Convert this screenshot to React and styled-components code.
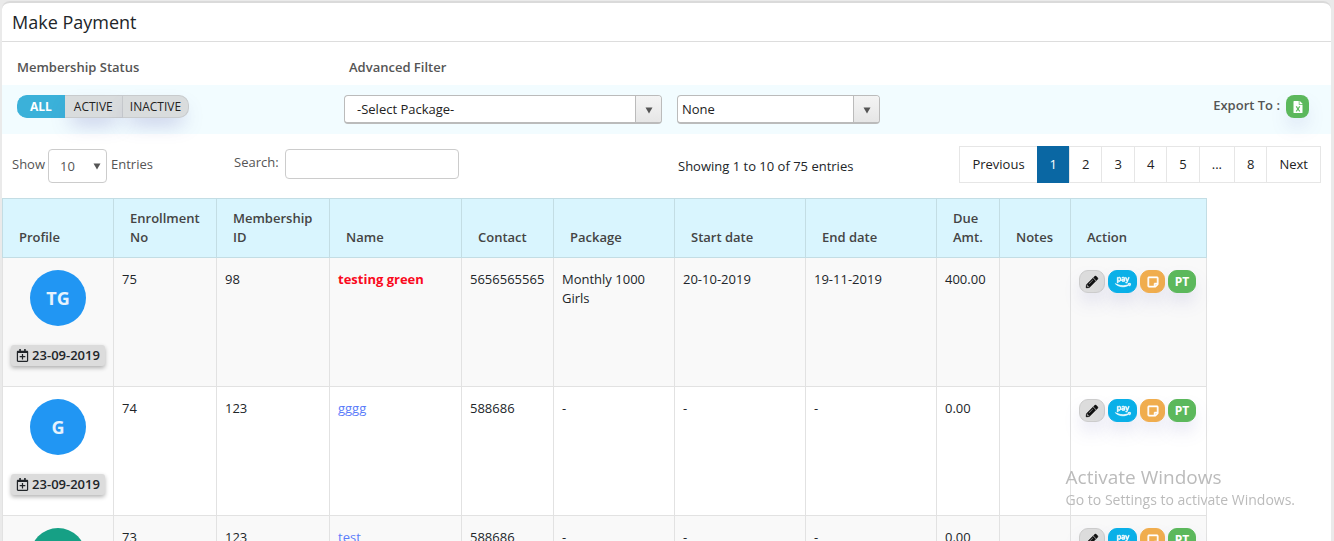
import styled, { createGlobalStyle } from "styled-components"
import {
    FaAmazonPay,
    FaFileExcel,
    FaPencilAlt,
    FaRegCalendarPlus,
    FaRegStickyNote,
} from "react-icons/fa"

const members = [
    {
        initials: "TG",
        color: "#2196F3",
        joined: "23-09-2019",
        enrollment: "75",
        memberId: "98",
        name: "testing green",
        due: true,
        contact: "5656565565",
        plan: "Monthly 1000 Girls",
        start: "20-10-2019",
        end: "19-11-2019",
        amount: "400.00",
    },
    {
        initials: "G",
        color: "#2196F3",
        joined: "23-09-2019",
        enrollment: "74",
        memberId: "123",
        name: "gggg",
        contact: "588686",
        plan: "-",
        start: "-",
        end: "-",
        amount: "0.00",
    },
    {
        initials: "T",
        color: "#16A085",
        joined: "23-09-2019",
        enrollment: "73",
        memberId: "123",
        name: "test",
        contact: "588686",
        plan: "-",
        start: "-",
        end: "-",
        amount: "0.00",
    },
]

const columns = [
    { label: "Profile", width: 111 },
    { label: "Enrollment No", width: 103 },
    { label: "Membership ID", width: 113 },
    { label: "Name", width: 132 },
    { label: "Contact", width: 92 },
    { label: "Package", width: 121 },
    { label: "Start date", width: 131 },
    { label: "End date", width: 131 },
    { label: "Due Amt.", width: 63 },
    { label: "Notes", width: 71 },
    { label: "Action", width: 136 },
]

const pages = ["Previous", "1", "2", "3", "4", "5", "...", "8", "Next"]

const Arrow = () => (
    <ArrowIcon viewBox="0 0 8 7" aria-hidden="true">
        <path d="M0.5 0.5h7L4 6.5z" fill="currentColor" />
    </ArrowIcon>
)

const MemberRow = ({ member }) => {
    return (
        <Row>
            <ProfileCell>
                <Avatar $color={member.color}>{member.initials}</Avatar>
                <JoinDate>
                    <FaRegCalendarPlus />
                    {member.joined}
                </JoinDate>
            </ProfileCell>
            <Cell>{member.enrollment}</Cell>
            <Cell>{member.memberId}</Cell>
            <Cell>
                <NameLink href="#" $due={member.due}>{member.name}</NameLink>
            </Cell>
            <Cell>{member.contact}</Cell>
            <Cell>{member.plan}</Cell>
            <Cell>{member.start}</Cell>
            <Cell>{member.end}</Cell>
            <Cell>{member.amount}</Cell>
            <Cell />
            <Cell>
                <Actions>
                    <ActionButton $width={26} $bg="#DCDCDC" $fg="#111" $edge="#CCC" aria-label="Edit">
                        <FaPencilAlt size={12} strokeWidth={16} />
                    </ActionButton>
                    <ActionButton $width={29} $bg="#0AB0E8" aria-label="Pay">
                        <FaAmazonPay size={16} strokeWidth={28} />
                    </ActionButton>
                    <ActionButton $width={25} $bg="#F0AD4E" aria-label="Note">
                        <FaRegStickyNote size={12} strokeWidth={24} />
                    </ActionButton>
                    <ActionButton $width={28} $bg="#5CB85C">PT</ActionButton>
                </Actions>
            </Cell>
        </Row>
    )
}

const App = () => {
    return (
        <>
            <GlobalStyle />
            <Panel>
                <PanelTitle>Make Payment</PanelTitle>
                <FilterLabels>
                    <FilterLabel>Membership Status</FilterLabel>
                    <FilterLabel as="label" htmlFor="package">Advanced Filter</FilterLabel>
                </FilterLabels>
                <FilterBar>
                    <StatusColumn>
                        <StatusGroup>
                            <StatusButton $active>ALL</StatusButton>
                            <StatusButton>ACTIVE</StatusButton>
                            <StatusButton>INACTIVE</StatusButton>
                        </StatusGroup>
                    </StatusColumn>
                    <SelectBox $width={318}>
                        <FilterSelect id="package" $indent={12}>
                            <option>-Select Package-</option>
                        </FilterSelect>
                        <SelectToggle><Arrow /></SelectToggle>
                    </SelectBox>
                    <SelectBox $width={203}>
                        <FilterSelect aria-label="Filter by" $indent={4}>
                            <option>None</option>
                        </FilterSelect>
                        <SelectToggle><Arrow /></SelectToggle>
                    </SelectBox>
                    <Export>
                        Export To :
                        <ExportButton aria-label="Export to Excel">
                            <FaFileExcel size={12} />
                        </ExportButton>
                    </Export>
                </FilterBar>
                <TableTools>
                    <Length>
                        Show
                        <LengthBox>
                            <LengthSelect aria-label="Entries per page">
                                <option>10</option>
                            </LengthSelect>
                            <LengthArrow><Arrow /></LengthArrow>
                        </LengthBox>
                        Entries
                    </Length>
                    <Search>
                        Search:
                        <SearchInput type="text" />
                    </Search>
                    <Info>Showing 1 to 10 of 75 entries</Info>
                    <Pagination>
                        {pages.map((page) => (
                            <PageButton key={page} $active={page === "1"}>{page}</PageButton>
                        ))}
                    </Pagination>
                </TableTools>
                <Table>
                    <colgroup>
                        {columns.map((column) => (
                            <col key={column.label} width={column.width} />
                        ))}
                    </colgroup>
                    <thead>
                        <tr>
                            {columns.map((column) => (
                                <HeadCell key={column.label}>{column.label}</HeadCell>
                            ))}
                        </tr>
                    </thead>
                    <tbody>
                        {members.map((member) => (
                            <MemberRow key={member.enrollment} member={member} />
                        ))}
                    </tbody>
                </Table>
            </Panel>
            <Watermark>
                <WatermarkTitle>Activate Windows</WatermarkTitle>
                <WatermarkText>Go to Settings to activate Windows.</WatermarkText>
            </Watermark>
        </>
    )
}

export default App

const GlobalStyle = createGlobalStyle`
* {
box-sizing: border-box;
}

body {
margin: 0;
background: #EAEAEA;
color: #212529;
font-family: "Open Sans", sans-serif;
font-size: 13px;
line-height: 19px;
}

button, input, select {
font-family: inherit;
font-size: inherit;
}
`

const Panel = styled.main`
margin: 1px 3px 0 2px;
border-top: 2px solid #DADADA;
border-radius: 8px 8px 0 0;
background: #FFF;
`

const PanelTitle = styled.h1`
margin: 0;
padding: 7px 10px;
border-bottom: 1px solid #DDD;
font-size: 18px;
font-weight: 400;
line-height: 24px;
`

const FilterLabels = styled.div`
display: flex;
padding: 16px 15px 8px;
`

const FilterLabel = styled.div`
color: #555;
font-weight: 600;

&:first-child {
width: 332px;
}
`

const FilterBar = styled.div`
display: flex;
align-items: flex-start;
gap: 15px;
padding: 10px 22px 10px 15px;
background: #F2FCFF;
`

const StatusColumn = styled.div`
width: 312px;
`

const StatusGroup = styled.div`
display: inline-flex;
`

const StatusButton = styled.button`
height: 23px;
padding: ${(props) => (props.$active ? "0 12px 0 13px" : "0 9px")};
border: 1px solid ${(props) => (props.$active ? "#3BB1D9" : "#C8CBCD")};
border-left-width: 0;
background: ${(props) => (props.$active ? "#3BB1D9" : "#D9DCDD")};
color: ${(props) => (props.$active ? "#FFF" : "#222")};
box-shadow: ${(props) => (props.$active ? "none" : "0 10px 20px -6px rgba(80, 80, 170, 0.4)")};
font-size: 12px;
font-weight: ${(props) => (props.$active ? 700 : 400)};
cursor: pointer;

&:first-child {
border-radius: 10px 0 0 10px;
}

&:last-child {
padding: 0 7px;
border-radius: 0 10px 10px 0;
}
`

const SelectBox = styled.div`
display: flex;
width: ${(props) => props.$width}px;
height: 29px;
border: 1px solid #BBB;
border-bottom-width: 2px;
border-radius: 4px;
background: #FFF;
overflow: hidden;
`

const FilterSelect = styled.select`
flex: 1;
padding: 0 ${(props) => props.$indent}px;
border: 0;
background: transparent;
color: #222;
appearance: none;
outline: none;
`

const SelectToggle = styled.span`
display: flex;
align-items: center;
justify-content: center;
width: 26px;
padding-top: 2px;
border-left: 1px solid #BBB;
background: linear-gradient(#F4F4F4, #E6E6E6);
color: #555;
`

const ArrowIcon = styled.svg`
width: 8px;
height: 7px;
`

const Export = styled.div`
display: flex;
gap: 6px;
margin-left: auto;
color: #555;
font-weight: 600;
line-height: 20px;
`

const ExportButton = styled.button`
display: flex;
align-items: center;
justify-content: center;
width: 23px;
height: 23px;
padding: 0;
border: 0;
border-radius: 8px;
background: #5CB85C;
color: #FFF;
box-shadow: 0 10px 20px -6px rgba(80, 80, 170, 0.4);
cursor: pointer;
`

const TableTools = styled.div`
display: flex;
align-items: flex-start;
padding: 12px 10px 15px;
`

const Length = styled.div`
display: flex;
gap: 4px;
width: 222px;
padding-top: 3px;
color: #555;
line-height: 30px;
`

const LengthBox = styled.div`
position: relative;
margin-left: -1px;
`

const LengthSelect = styled.select`
display: block;
width: 59px;
height: 34px;
padding: 0 11px;
border: 1px solid #CCC;
border-radius: 4px;
background: #FFF;
color: #555;
appearance: none;
`

const LengthArrow = styled.span`
display: flex;
align-items: center;
position: absolute;
top: 0;
bottom: 0;
right: 6px;
pointer-events: none;
`

const Search = styled.label`
display: flex;
gap: 6px;
width: 444px;
padding-top: 3px;
color: #555;
line-height: 26px;
`

const SearchInput = styled.input`
width: 174px;
height: 30px;
padding: 0 8px;
border: 1px solid #CCC;
border-radius: 4px;
background: #FFF;
`

const Info = styled.div`
padding-top: 11px;
`

const Pagination = styled.nav`
display: flex;
margin-left: auto;
`

const PageButton = styled.button`
height: 37px;
padding: 0 12px 2px;
border: 1px solid ${(props) => (props.$active ? "#0A67A3" : "#E6E6E6")};
margin-left: -1px;
background: ${(props) => (props.$active ? "#0A67A3" : "#FFF")};
color: ${(props) => (props.$active ? "#FFF" : "#222")};
cursor: pointer;
`

const Table = styled.table`
border-collapse: collapse;
table-layout: fixed;
width: 1205px;
max-width: 100%;
`

const HeadCell = styled.th`
padding: 10px 16px;
border: 1px solid #C3DDE4;
background: #D9F5FE;
color: #444;
font-weight: 600;
text-align: left;
vertical-align: bottom;
`

const Row = styled.tr`
&:nth-child(odd) {
background: #F9F9F9;
}
`

const Cell = styled.td`
height: 129px;
padding: 12px 8px;
border: 1px solid #E2E2E2;
vertical-align: top;
`

const ProfileCell = styled(Cell)`
text-align: center;
`

const Avatar = styled.div`
display: flex;
align-items: center;
justify-content: center;
width: 56px;
height: 56px;
margin: 0 auto 19px;
border-radius: 50%;
background: ${(props) => props.$color};
color: #E6F2FD;
font-size: 18px;
font-weight: 700;
`

const JoinDate = styled.span`
display: inline-flex;
align-items: center;
gap: 3px;
height: 21px;
margin: 0 -4px;
padding: 0 5px;
border-radius: 3px;
background: #DCDCDC;
box-shadow: 0 2px 4px rgba(0, 0, 0, 0.3);
font-weight: 600;
white-space: nowrap;
`

const NameLink = styled.a`
color: ${(props) => (props.$due ? "#FA0A1E" : "#5B7CFA")};
font-weight: ${(props) => (props.$due ? 700 : 400)};
text-decoration: none;
`

const Actions = styled.div`
display: flex;
gap: 3px;
`

const ActionButton = styled.button`
display: flex;
align-items: center;
justify-content: center;
width: ${(props) => props.$width}px;
height: 23px;
padding: 0;
border: 1px solid ${(props) => props.$edge || props.$bg};
border-radius: 9px;
background: ${(props) => props.$bg};
color: ${(props) => props.$fg || "#FFF"};
box-shadow: 0 10px 20px -6px rgba(80, 80, 170, 0.4);
font-size: 12px;
font-weight: 700;
cursor: pointer;

svg {
overflow: visible;
}
`

const Watermark = styled.aside`
position: fixed;
right: 39px;
bottom: 31px;
color: #BBB;
pointer-events: none;
`

const WatermarkTitle = styled.div`
font-size: 19px;
line-height: 26px;
`

const WatermarkText = styled.div`
font-size: 14px;
line-height: 20px;
`
